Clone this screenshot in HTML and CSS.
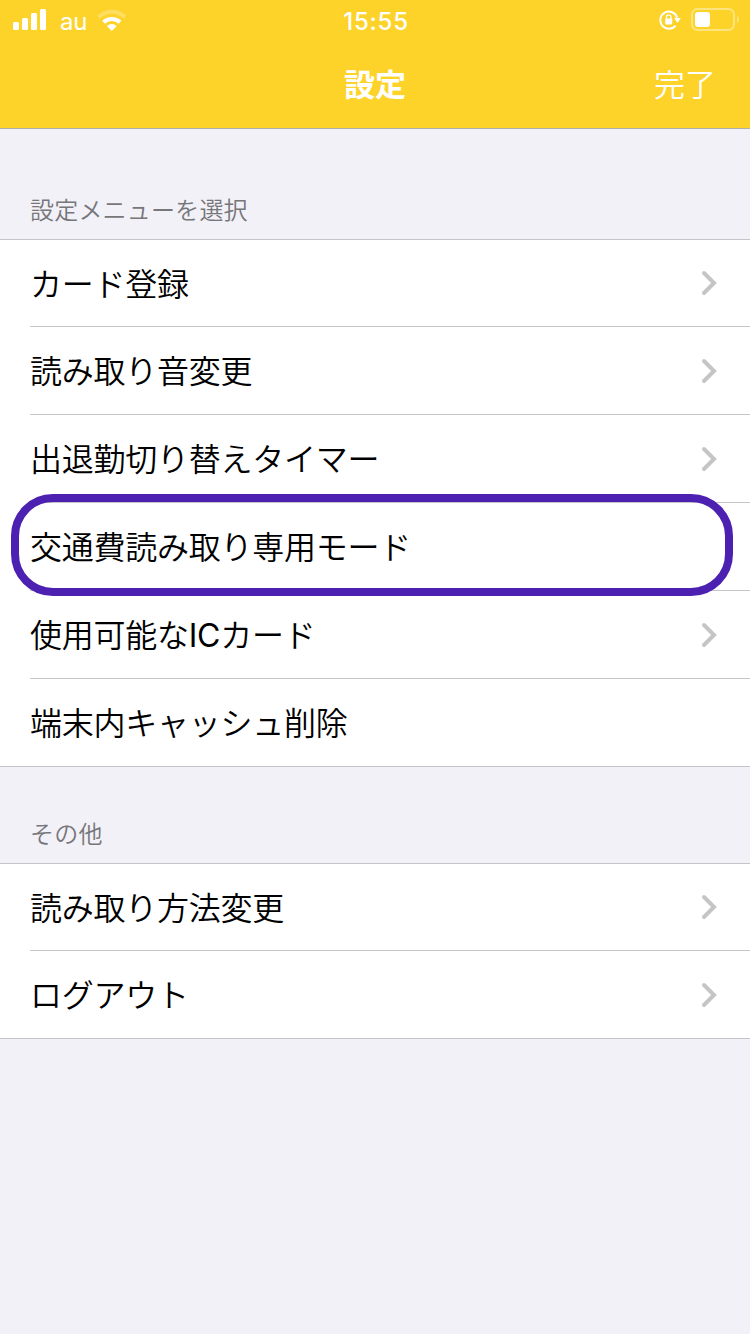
FILE: index.html
```html
<!DOCTYPE html>
<html lang="ja">
<head>
    <meta charset="UTF-8">
    <meta name="viewport" content="width=device-width, initial-scale=1.0">
    <title>設定</title>
    <link rel="stylesheet" href="styles.css">
</head>
<body>
    <header>
        <div class="status-bar">
            <div class="status-left">
                <svg width="34" height="22" viewBox="0 0 34 22" fill="#fff">
                    <rect x="0" y="13" width="6" height="8" rx="1.5"/>
                    <rect x="9" y="9" width="6" height="12" rx="1.5"/>
                    <rect x="18" y="4" width="6" height="17" rx="1.5"/>
                    <rect x="27" y="0" width="6" height="21" rx="1.5"/>
                </svg>
                <span class="carrier">au</span>
                <svg class="wifi" width="30" height="22" viewBox="0 0 30 22" fill="none" stroke="#fff" stroke-width="4">
                    <path d="M1.6 8.2A19 19 0 0 1 28 8.2" opacity="0.25"/>
                    <path d="M6.6 13.2A12 12 0 0 1 23 13.2"/>
                    <path d="M9.9 17A7.2 7.2 0 0 1 19.7 17L14.8 22Z" fill="#fff" stroke="none"/>
                </svg>
            </div>
            <span class="time">15:55</span>
            <div class="status-right">
                <svg width="22" height="20" viewBox="0 0 22 20" fill="none" stroke="#fff" stroke-width="2">
                    <path d="M16.6 15.6A8.6 8.6 0 1 1 18.1 7.6"/>
                    <path d="M15.2 8H21.8L18.5 13Z" fill="#fff" stroke="none"/>
                    <rect x="6.2" y="8.6" width="7" height="5.8" rx="0.8" fill="#fff" stroke="none"/>
                    <path d="M7.5 9V7A2.2 2.2 0 0 1 11.9 7V9" stroke-width="1.3"/>
                </svg>
                <svg width="48" height="24" viewBox="0 0 48 24">
                    <rect x="1" y="1" width="42" height="21" rx="5.5" fill="none" stroke="#fff" stroke-width="2" opacity="0.4"/>
                    <rect x="4" y="4" width="15" height="15" rx="3" fill="#fff"/>
                    <path d="M46 8C48.6 9.5 48.6 13.5 46 15Z" fill="#fff" opacity="0.4"/>
                </svg>
            </div>
        </div>
        <nav>
            <h1>設定</h1>
            <a class="done" href="#">完了</a>
        </nav>
    </header>
    <main>
        <h2>設定メニューを選択</h2>
        <ul class="menu">
            <li><span>カード登録</span><svg class="arrow" viewBox="0 0 16 26"><path d="M3 3L13 13L3 23"/></svg></li>
            <li><span>読み取り音変更</span><svg class="arrow" viewBox="0 0 16 26"><path d="M3 3L13 13L3 23"/></svg></li>
            <li><span>出退勤切り替えタイマー</span><svg class="arrow" viewBox="0 0 16 26"><path d="M3 3L13 13L3 23"/></svg></li>
            <li class="highlight"><span>交通費読み取り専用モード</span></li>
            <li><span>使用可能な<span class="latin">IC</span>カード</span><svg class="arrow" viewBox="0 0 16 26"><path d="M3 3L13 13L3 23"/></svg></li>
            <li><span>端末内キャッシュ削除</span></li>
        </ul>
        <h2 class="other">その他</h2>
        <ul class="menu">
            <li><span>読み取り方法変更</span><svg class="arrow" viewBox="0 0 16 26"><path d="M3 3L13 13L3 23"/></svg></li>
            <li><span>ログアウト</span><svg class="arrow" viewBox="0 0 16 26"><path d="M3 3L13 13L3 23"/></svg></li>
        </ul>
    </main>
</body>
</html>
```
FILE: styles.css
```css
* {
    box-sizing: border-box;
}
body {
    margin: 0;
    min-height: 100vh;
    background: #f2f1f7;
    color: #000;
    font-family: 'Noto Sans CJK JP', sans-serif;
}
header {
    height: 129px;
    background: #fdd32a;
    border-bottom: 1px solid #b0aeac;
    color: #fff;
}
.status-bar {
    display: grid;
    grid-template-columns: 1fr auto 1fr;
    align-items: center;
    height: 40px;
    padding: 0 11px 0 13px;
    font-family: 'Inter', sans-serif;
}
.status-left, .status-right {
    display: flex;
    align-items: center;
}
.carrier {
    margin-left: 13px;
    padding-top: 2px;
    font-size: 24px;
    letter-spacing: -0.2px;
}
.wifi {
    margin-left: 10px;
}
.time {
    padding-top: 2px;
    font-size: 24px;
    font-weight: 500;
    letter-spacing: 0.8px;
}
.status-right {
    justify-content: flex-end;
    gap: 10px;
}
nav {
    display: grid;
    grid-template-columns: 1fr auto 1fr;
    align-items: center;
    height: 84px;
    padding: 0 34px;
}
nav h1 {
    grid-column: 2;
    margin: 0;
    font-size: 31px;
    font-weight: 700;
}
.done {
    justify-self: end;
    color: #fff;
    font-size: 31px;
    font-weight: 350;
    text-decoration: none;
}
/* Section titles */
h2 {
    margin: 0;
    height: 110px;
    padding: 62px 30px 0;
    color: #77767b;
    font-size: 24px;
    font-weight: 350;
    line-height: 36px;
    letter-spacing: 0.2px;
}
.other {
    height: 96px;
    padding-top: 48px;
}
/* Menu lists */
.menu {
    margin: 0;
    padding: 0 0 0 30px;
    list-style: none;
    background: #fff;
    border-top: 1px solid #c5c5c7;
    border-bottom: 1px solid #c5c5c7;
}
.menu li {
    display: flex;
    align-items: center;
    justify-content: space-between;
    height: 88px;
    padding-right: 33px;
    border-bottom: 1px solid #c5c5c7;
    font-size: 32px;
    font-weight: 350;
    letter-spacing: -0.25px;
}
.menu li > span {
    padding-bottom: 3px;
}
.menu li:first-child {
    height: 87px;
}
.menu li:last-child {
    height: 87px;
    border-bottom: none;
}
.latin {
    font-family: 'Inter', sans-serif;
    font-weight: 400;
}
.arrow {
    width: 16px;
    height: 26px;
    fill: none;
    stroke: #c5c5c7;
    stroke-width: 4;
    stroke-linecap: round;
    stroke-linejoin: miter;
}
/* Purple frame around the transit-fare mode row */
.highlight {
    position: relative;
}
.highlight::after {
    content: '';
    position: absolute;
    box-sizing: border-box;
    top: -9px;
    left: -19px;
    width: 722px;
    height: 102px;
    border: 8px solid #4c20b1;
    border-radius: 42px;
}
```
